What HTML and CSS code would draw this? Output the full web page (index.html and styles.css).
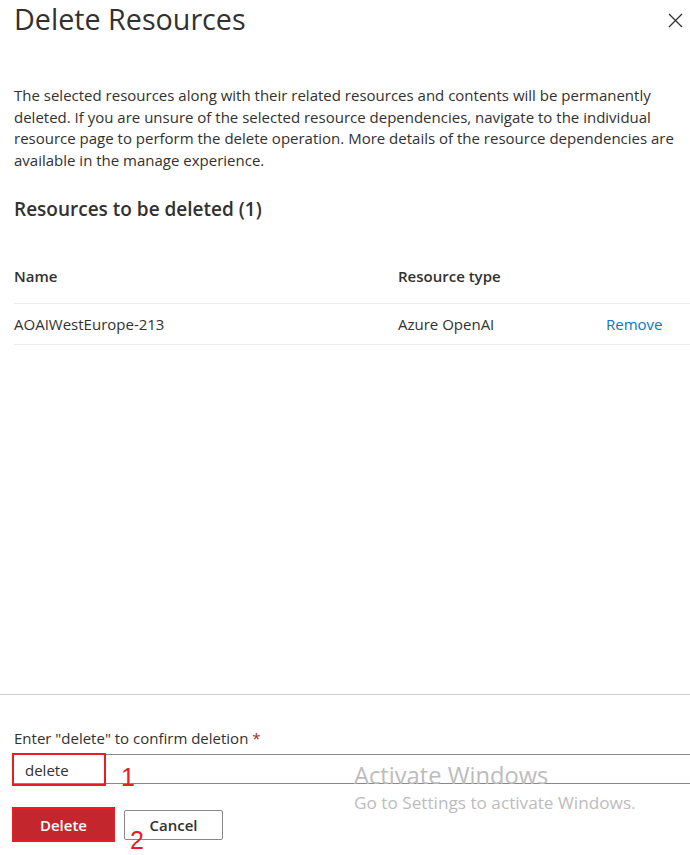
FILE: index.html
```html
<!DOCTYPE html>
<html>
<head>
<meta charset="utf-8">
<link rel="stylesheet" href="styles.css">
</head>
<body>
<div class="panel">
  <header class="head">
    <h1 class="title">Delete Resources</h1>
    <button class="close" aria-label="Close">
      <svg width="15" height="15" viewBox="0 0 15 15"><path d="M1 1L14 14M14 1L1 14" stroke="#323130" stroke-width="1.3" fill="none"/></svg>
    </button>
  </header>
  <div class="body">
    <p class="desc">The selected resources along with their related resources and contents will be permanently deleted. If you are unsure of the selected resource dependencies, navigate to the individual resource page to perform the delete operation. More details of the resource dependencies are available in the manage experience.</p>
    <h2 class="sub">Resources to be deleted (1)</h2>
    <div class="table">
      <div class="row thead">
        <div class="c1">Name</div>
        <div class="c2">Resource type</div>
        <div class="c3"></div>
      </div>
      <div class="row">
        <div class="c1">AOAIWestEurope-213</div>
        <div class="c2">Azure OpenAI</div>
        <div class="c3"><a class="link">Remove</a></div>
      </div>
    </div>
  </div>
  <footer class="foot">
    <label class="label">Enter "delete" to confirm deletion <span class="req">*</span></label>
    <div class="inputwrap">
      <div class="input">delete</div>
      <span class="mark box1"></span>
      <span class="num n1">1</span>
    </div>
    <div class="actions">
      <button class="btn primary">Delete<span class="mark box2"></span></button>
      <button class="btn secondary">Cancel</button>
      <span class="num n2">2</span>
    </div>
    <div class="watermark">
      <div class="wm1">Activate Windows</div>
      <div class="wm2">Go to Settings to activate Windows.</div>
    </div>
  </footer>
</div>
</body>
</html>
```
FILE: styles.css
```css
html, body {
  margin: 0;
  padding: 0;
  background: #fff;
}
body {
  font-family: "Open Sans", "Noto Sans", sans-serif;
  color: #323130;
  width: 690px;
  height: 855px;
  overflow: hidden;
}
.panel {
  height: 855px;
  display: flex;
  flex-direction: column;
  position: relative;
}
.head {
  display: flex;
  justify-content: space-between;
  align-items: flex-start;
  padding: 0 0 0 14px;
}
.title {
  margin: 0;
  font-size: 28.7px;
  font-weight: 400;
  line-height: 38px;
  color: #323130;
}
.close {
  border: none;
  background: none;
  padding: 0;
  margin: 13px 7px 0 0;
  width: 15px;
  height: 15px;
  display: flex;
}
.body {
  padding: 0 0 0 14px;
  flex: 1;
}
.desc {
  margin: 47px 0 0 0;
  font-size: 15px;
  line-height: 21.7px;
  color: #323130;
}
.sub {
  margin: 25px 0 0 0;
  font-size: 19px;
  font-weight: 550;
  line-height: 24px;
}
.table {
  margin-top: 44px;
}
.row {
  display: flex;
  align-items: center;
  height: 40px;
  border-bottom: 1px solid #edebe9;
  font-size: 15px;
  line-height: 22px;
}
.thead {
  font-weight: 600;
  height: 38px;
  align-items: flex-start;
}
.c1 { width: 384px; }
.c2 { width: 208px; }
.c3 { flex: 1; }
.link {
  color: #0078d4;
}
.foot {
  border-top: 1px solid #d2d0ce;
  padding: 32px 0 0 14px;
  height: 128px;
  position: relative;
}
.label {
  display: block;
  font-size: 15px;
  line-height: 22px;
  color: #323130;
}
.req { color: #a4262c; }
.inputwrap {
  position: relative;
  margin-top: 5px;
}
.input {
  height: 28px;
  border-top: 1px solid #8a8886;
  border-bottom: 1px solid #8a8886;
  font-size: 15px;
  line-height: 30px;
  padding-left: 11px;
  color: #323130;
}
.mark {
  position: absolute;
  border: 2px solid #ec1c24;
  box-sizing: border-box;
}
.box1 {
  left: -2px;
  top: -1px;
  width: 94px;
  height: 33px;
}
.num {
  position: absolute;
  color: #ec1c24;
  font-family: "Liberation Sans", sans-serif;
  font-size: 25px;
  line-height: 25px;
}
.n1 { left: 107px; top: 11px; }
.actions {
  display: flex;
  align-items: center;
  gap: 9px;
  margin-top: 23px;
  position: relative;
}
.btn {
  font-family: inherit;
  font-size: 15px;
  font-weight: 600;
  height: 30px;
  padding: 0;
  border-radius: 2px;
  position: relative;
}
.primary {
  background: #c4262e;
  color: #fff;
  border: none;
  width: 103px;
  height: 35px;
  margin-left: -2px;
  border-radius: 0;
}
.box2 {
  left: 0;
  top: 0;
  width: 103px;
  height: 35px;
}
.secondary {
  background: #fff;
  color: #323130;
  border: 1px solid #8a8886;
  width: 99px;
}
.n2 { left: 116px; top: 21px; }
.watermark {
  position: absolute;
  left: 354px;
  top: 65px;
  color: #bcbcbc;
  pointer-events: none;
}
.wm1 {
  font-size: 23.7px;
  line-height: 30px;
}
.wm2 {
  font-size: 17.2px;
  line-height: 26px;
}
```
